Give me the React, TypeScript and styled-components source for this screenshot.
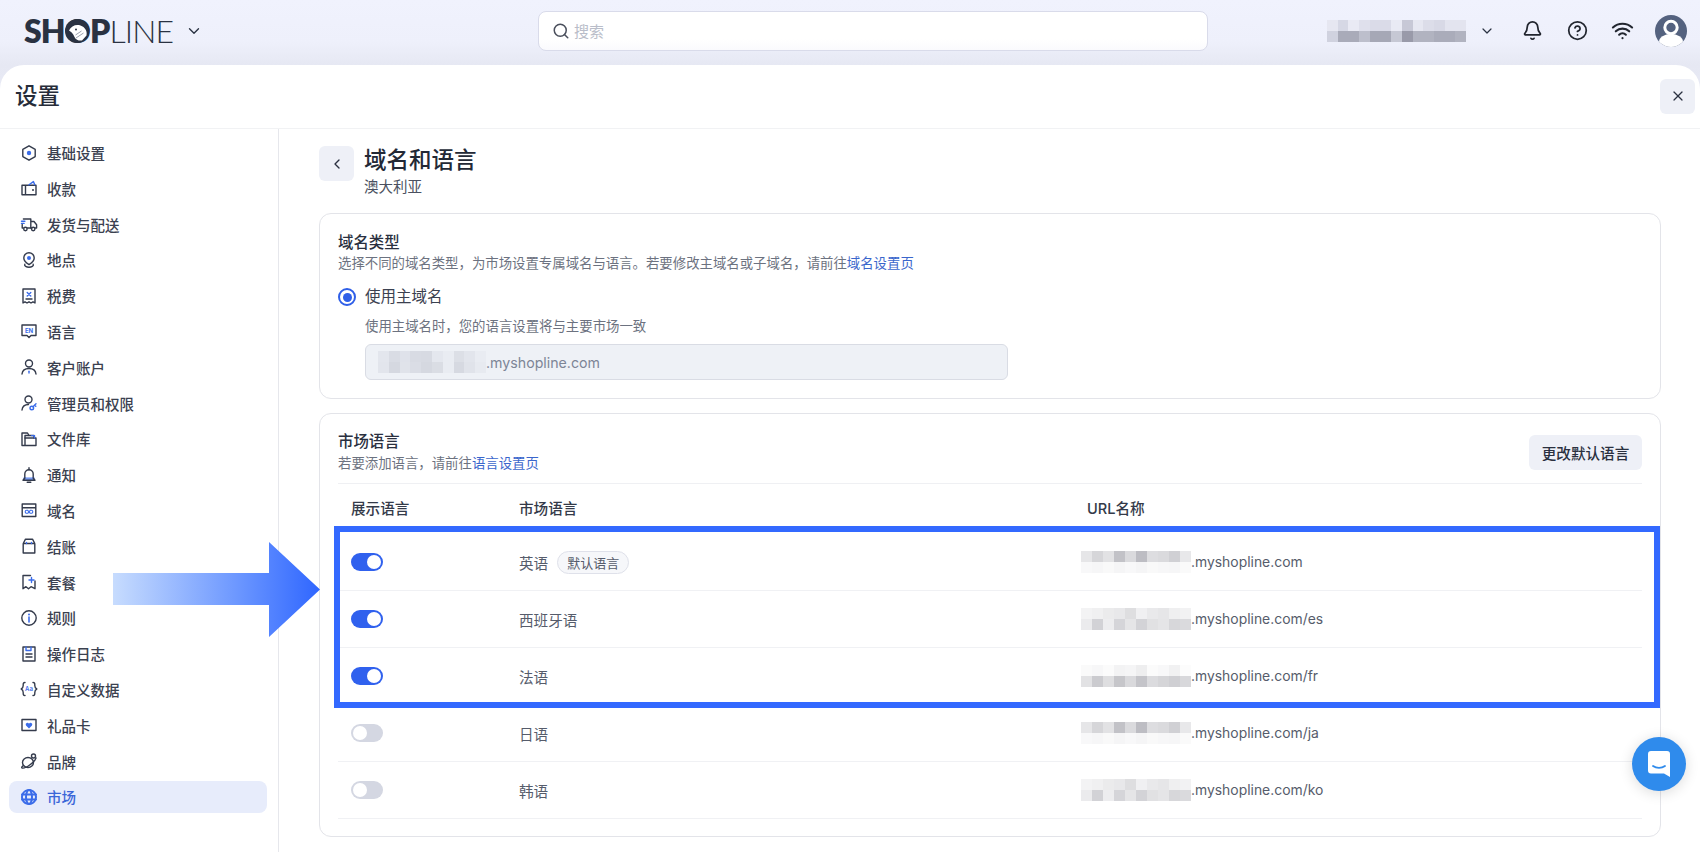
import React from "react";
import styled, { createGlobalStyle } from "styled-components";
import { Bell, ChevronDown, ChevronLeft, CircleHelp, Search, Wifi, X } from "lucide-react";

const GlobalStyle = createGlobalStyle`
  html, body {
    margin: 0;
    padding: 0;
    background: #fff;
  }
  body {
    font-family: Inter, "Noto Sans CJK SC", sans-serif;
    color: #2a3040;
  }
`;

const DARK = "#343b4c";
const BLUE = "#3b6ce9";

// 사이드바 아이콘
const navIcons: Record<string, React.ReactNode> = {
  hex: (
    <>
      <path d="M9 1.8l6.2 3.6v7.2L9 16.2l-6.2-3.6V5.4z" />
      <circle cx="9" cy="9" r="2.2" fill={BLUE} stroke="none" />
    </>
  ),
  wallet: (
    <>
      <path d="M2 6.2h14v9.6H2zM5.5 6.2v9.6" />
      <path d="M9 5.8l4.4-3.2 1.4 3.2" stroke={BLUE} />
      <circle cx="13" cy="11" r="1" fill={DARK} stroke="none" />
    </>
  ),
  truck: (
    <>
      <path d="M3.4 4h7.4v9H7.4M3.2 13H2.2V9.5M10.8 6.5h3.2l2.6 3.2V13h-1.4" />
      <path d="M10.8 13h1" />
      <circle cx="5.4" cy="14" r="1.7" />
      <circle cx="13.2" cy="14" r="1.7" />
      <path d="M1.5 6.2h3.4M1.5 8.4h2.6" stroke={BLUE} />
    </>
  ),
  pin: (
    <>
      <path d="M9 1.8A5.2 5.2 0 0 1 14.2 7c0 3-2.8 5.2-5.2 6.6C6.6 12.2 3.8 10 3.8 7A5.2 5.2 0 0 1 9 1.8z" />
      <circle cx="9" cy="7" r="2" fill={BLUE} stroke="none" />
      <path d="M4.8 13.2c-.8 1.8 1.8 3 4.2 3s5-1.2 4.2-3" />
    </>
  ),
  receipt: (
    <>
      <path d="M3 2h12v14l-2-1.2-2 1.2-2-1.2-2 1.2-2-1.2L3 16z" />
      <path d="M7.2 5.5l3.6 3.6M10.8 5.500L7.2 9.1" stroke={BLUE} />
      <path d="M6 12h6" />
    </>
  ),
  lang: (
    <>
      <path d="M2 3h14v10.5h-5l-2 2-2-2H2z" />
      <text x="9" y="10.6" textAnchor="middle" fontSize="6" fontWeight="700" fill={BLUE} stroke="none" fontFamily="Inter, sans-serif">EN</text>
    </>
  ),
  user: (
    <>
      <circle cx="9" cy="5.5" r="3.5" />
      <path d="M2 16c.4-3.8 3.200-5.500 7-5.500s6.600 1.700 7 5.500" />
      <path d="M9 13.2V15" stroke={BLUE} />
    </>
  ),
  userKey: (
    <>
      <circle cx="8.5" cy="5.5" r="3.5" />
      <path d="M2 16c.4-3.600 3.200-5.500 6.500-5.500" />
      <circle cx="11.8" cy="14" r="1.8" stroke={BLUE} />
      <path d="M13 12.7l3-3M14.6 11.100l1.200 1.200" stroke={BLUE} />
    </>
  ),
  folder: (
    <>
      <path d="M2 15.500V3h5.500L9 5.500M2 15.500h14V8H5v7.500" />
      <path d="M5 8V5.500h9V8" />
      <path d="M11.500 5.600h3V8" stroke={BLUE} />
    </>
  ),
  bell: (
    <>
      <path d="M4.800 12V8a4.200 4.200 0 0 1 8.400 0v4" />
      <path d="M3.400 11.400h11.200v2.800H3.400z" fill={BLUE} stroke="none" opacity="0.7" />
      <path d="M3 14.200h12M4.800 12L3 14.200M13.200 12l1.800 2.200M7.200 16.200h3.600M9 1.800v2" />
    </>
  ),
  domain: (
    <>
      <path d="M2.200 3h13.600v12.500H2.200zM2.200 6.800h13.600" />
      <path d="M6.700 9.300a1.500 1.500 0 1 0 0 3h1l2.600-3h1a1.500 1.500 0 1 1 0 3h-1l-2.600-3z" stroke={BLUE} strokeWidth="1.100" />
    </>
  ),
  bag: (
    <>
      <path d="M3.200 6.500h11.600V16H3.200zM3.200 6.500L5.500 2.200h7l2.300 4.300" />
      <path d="M6.500 5.500v1M11.500 5.500v1" stroke={BLUE} />
    </>
  ),
  plan: (
    <>
      <path d="M10.500 2.500H3v13.200l3-2 2.500 2 2.500-2 4 2V8" />
      <path d="M11.500 4.500v5M9 7h5" stroke={BLUE} />
    </>
  ),
  info: (
    <>
      <circle cx="9" cy="9" r="7.200" />
      <path d="M9 8v5" stroke={BLUE} strokeWidth="1.600" />
      <circle cx="9" cy="5.500" r="1" fill={BLUE} stroke="none" />
    </>
  ),
  log: (
    <>
      <path d="M3 2h12v14H3z" />
      <path d="M6 2v3.500h5V2" stroke={BLUE} />
      <path d="M6 9h6M6 12h6" />
    </>
  ),
  data: (
    <>
      <path d="M5 2.500c-2 0-1.800 1.500-1.800 3 0 1.800-.4 2.700-2 3.500 1.600.8 2 1.700 2 3.500 0 1.500-.2 3 1.800 3" />
      <path d="M13 2.500c2 0 1.800 1.500 1.800 3 0 1.800.4 2.700 2 3.500-1.600.8-2 1.700-2 3.500 0 1.500.2 3-1.800 3" />
      <text x="9" y="11" textAnchor="middle" fontSize="6" fontWeight="600" fill={BLUE} stroke="none" fontFamily="Inter, sans-serif">Aa</text>
    </>
  ),
  gift: (
    <>
      <path d="M2 3.500h14v11H2z" />
      <path d="M9 12.500L6 9.500a1.700 1.700 0 0 1 3-1.800 1.700 1.700 0 0 1 3 1.800z" fill={BLUE} stroke="none" />
    </>
  ),
  brand: (
    <>
      <ellipse cx="8" cy="10.500" rx="5.500" ry="5" />
      <path d="M3.600 13.400C2 14.500 1.200 15.500 2 16c1.500.5 5-1 8-3.200 3-2.200 5.500-5 6-6.800" />
      <circle cx="13.500" cy="4" r="2" />
    </>
  ),
  globe: (
    <g stroke={BLUE} strokeWidth="2">
      <circle cx="9" cy="9" r="7" strokeDasharray="4 1" />
      <ellipse cx="9" cy="9" rx="3" ry="7" />
      <path d="M2 6.600h14M2 11.400h14" />
    </g>
  ),
};

const navItems = [
  { icon: "hex", label: "基础设置" },
  { icon: "wallet", label: "收款" },
  { icon: "truck", label: "发货与配送" },
  { icon: "pin", label: "地点" },
  { icon: "receipt", label: "税费" },
  { icon: "lang", label: "语言" },
  { icon: "user", label: "客户账户" },
  { icon: "userKey", label: "管理员和权限" },
  { icon: "folder", label: "文件库" },
  { icon: "bell", label: "通知" },
  { icon: "domain", label: "域名" },
  { icon: "bag", label: "结账" },
  { icon: "plan", label: "套餐" },
  { icon: "info", label: "规则" },
  { icon: "log", label: "操作日志" },
  { icon: "data", label: "自定义数据" },
  { icon: "gift", label: "礼品卡" },
  { icon: "brand", label: "品牌" },
  { icon: "globe", label: "市场", active: true },
];

// 가려진 도메인 모자이크 색상
const faintA = ["#f8f8f9", "#f6f6f7", "#f9f9f9", "#f5f5f6", "#f8f8f9", "#f5f5f6", "#f9f9f9", "#f7f7f8", "#f6f6f7", "#fafafa"];
const maskA = [
  ["#e6e6e8", "#d6d6d9", "#e2e2e4", "#c2c2c7", "#dadadd", "#bdbdc3", "#dddde0", "#dadadd", "#d0d0d4", "#e8e8ea"],
  faintA,
];
const maskB = [
  ["#f3f3f4", "#f0f0f1", "#ebebec", "#e8e8ea", "#dedee0", "#f0f0f2", "#e9e9eb", "#e6e6e8", "#efeff0", "#f2f2f3"],
  ["#ebebed", "#d2d2d6", "#ededef", "#d5d5d9", "#e5e5e7", "#d3d3d7", "#e1e1e3", "#e5e5e7", "#d7d7da", "#dadadd"],
];
const maskC = [
  ["#fafafa", "#f7f7f8", "#fbfbfb", "#f3f3f4", "#f5f5f6", "#eeeeef", "#fbfbfb", "#f8f8f9", "#f1f1f2", "#fcfcfc"],
  ["#e2e2e4", "#cbcbcf", "#dedee0", "#c6c6ca", "#d9d9dc", "#c4c4c9", "#dbdbde", "#d5d5d8", "#cfcfd3", "#d8d8db"],
];
const maskAccount = [
  ["#e6e7f1", "#d6d8e5", "#e9eaf4", "#dfe0ec", "#dadbe8", "#dadbe8", "#e9eaf4", "#c7c8d6", "#e6e7f1", "#dcdde9", "#d8d9e6", "#e3e4ef", "#e3e4ef"],
  ["#d0d2df", "#a9abb9", "#a9abb9", "#bdbfcc", "#a6a8b6", "#a6a8b6", "#c6c8d4", "#999aa9", "#b1b3c0", "#b1b3c0", "#aaacba", "#aaacba", "#b1b3c0"],
];
const maskInput = [
  ["#e3e6ed", "#d9dce4", "#dfe2ea", "#d8dbe3", "#d7dae2", "#e4e7ee", "#e9ecf2", "#dcdfe6", "#e2e5ec", "#e9ecf2"],
  ["#e2e5ec", "#d5d8e0", "#e0e3ea", "#dadde5", "#d5d8e0", "#dadde4", "#e9ecf2", "#d6d9e1", "#e0e3ea", "#e7eaf0"],
];

const languages = [
  { name: "英语", path: "myshopline.com", on: true, isDefault: true, mask: maskA },
  { name: "西班牙语", path: "myshopline.com/es", on: true, mask: maskB },
  { name: "法语", path: "myshopline.com/fr", on: true, mask: maskC },
  { name: "日语", path: "myshopline.com/ja", on: false, mask: maskA },
  { name: "韩语", path: "myshopline.com/ko", on: false, mask: maskB },
];

function Mosaic({ rows, $cell = 11 }: { rows: string[][]; $cell?: number }) {
  return (
    <MosaicGrid $cols={rows[0].length} $cell={$cell}>
      {rows.flat().map((color, i) => (
        <MosaicCell key={i} $color={color} />
      ))}
    </MosaicGrid>
  );
}

function App() {
  return (
    <Page>
      <GlobalStyle />
      <TopBar>
        <LogoBox>
          <Logo>
            <b>SH</b>
            <LogoO>
              O
              <LogoBird viewBox="0 0 24 24">
                <circle cx="12" cy="12" r="12" fill="#2a3242" />
                <path d="M4 11.500C6 7 11 5 15.500 6.500 20 8 22.500 12 21.500 16.500L17 21.500c-3 .5-6-.5-7.500-3.500-1-2-1.500-4-5.500-6.500z" fill="#fff" />
                <circle cx="11" cy="10.500" r="1" fill="#2a3242" />
                <path d="M11 19l7.500-5M10.500 16l6-4" stroke="#9aa0ad" strokeWidth="1" />
              </LogoBird>
            </LogoO>
            <b>P</b>LINE
          </Logo>
          <ChevronDown size={18} strokeWidth={1.8} color="#2a3242" />
        </LogoBox>
        <SearchBox>
          <Search size={18} strokeWidth={2} color="#4a4f5c" />
          <SearchText>搜索</SearchText>
        </SearchBox>
        <TopActions>
          <Mosaic rows={maskAccount} $cell={10.7} />
          <AccountChevron>
            <ChevronDown size={16} strokeWidth={1.8} color="#2a3242" />
          </AccountChevron>
          <TopIcon><Bell size={21} strokeWidth={2} /></TopIcon>
          <TopIcon><CircleHelp size={21} strokeWidth={2} /></TopIcon>
          <TopIcon><Wifi size={23} strokeWidth={2.2} /></TopIcon>
          <Avatar viewBox="0 0 32 32">
            <defs>
              <clipPath id="avatar-clip"><circle cx="16" cy="16" r="16" /></clipPath>
            </defs>
            <circle cx="16" cy="16" r="16" fill="#54627f" />
            <g clipPath="url(#avatar-clip)">
              <ellipse cx="16" cy="27" rx="12" ry="8" fill="#fff" />
              <circle cx="16" cy="12.5" r="6.2" fill="#54627f" stroke="#fff" strokeWidth="3" />
            </g>
          </Avatar>
        </TopActions>
      </TopBar>

      <Panel>
        <TitleBar>
          <PanelTitle>设置</PanelTitle>
          <SquareButton><X size={16} strokeWidth={1.8} color="#2a3040" /></SquareButton>
        </TitleBar>
        <Body>
          <Sidebar>
            {navItems.map((item) => (
              <NavItem key={item.label} $active={!!item.active}>
                <NavIcon viewBox="0 0 18 18">{navIcons[item.icon]}</NavIcon>
                {item.label}
              </NavItem>
            ))}
          </Sidebar>
          <Main>
            <PageHead>
              <SquareButton><ChevronLeft size={16} strokeWidth={2} color="#2a3040" /></SquareButton>
              <div>
                <PageTitle>域名和语言</PageTitle>
                <PageSub>澳大利亚</PageSub>
              </div>
            </PageHead>

            <DomainCard>
              <CardTitle>域名类型</CardTitle>
              <CardDesc>
                选择不同的域名类型，为市场设置专属域名与语言。若要修改主域名或子域名，请前往<TextLink>域名设置页</TextLink>
              </CardDesc>
              <RadioRow>
                <Radio />
                使用主域名
              </RadioRow>
              <RadioHint>使用主域名时，您的语言设置将与主要市场一致</RadioHint>
              <DomainInput>
                <Mosaic rows={maskInput} $cell={10.8} />
                .myshopline.com
              </DomainInput>
            </DomainCard>

            <MarketCard>
              <MarketHead>
                <MarketIntro>
                  <CardTitle>市场语言</CardTitle>
                  <CardDesc>若要添加语言，请前往<TextLink>语言设置页</TextLink></CardDesc>
                </MarketIntro>
                <GreyButton>更改默认语言</GreyButton>
              </MarketHead>
              <HeadRow>
                <span>展示语言</span>
                <span>市场语言</span>
                <span>URL名称</span>
              </HeadRow>
              {languages.map((lang) => (
                <LangRow key={lang.name}>
                  <Toggle $on={lang.on} />
                  <LangName>
                    {lang.name}
                    {lang.isDefault && <DefaultTag>默认语言</DefaultTag>}
                  </LangName>
                  <UrlCell>
                    <Mosaic rows={lang.mask} />
                    .{lang.path}
                  </UrlCell>
                </LangRow>
              ))}
            </MarketCard>
          </Main>
        </Body>
      </Panel>

      <CalloutArrow viewBox="0 0 207 95">
        <defs>
          <linearGradient id="arrow-fill" x1="0" x2="1" y1="0" y2="0">
            <stop offset="0" stopColor="#c7dcfe" />
            <stop offset="0.6" stopColor="#6c97ff" />
            <stop offset="1" stopColor="#2f66ff" />
          </linearGradient>
        </defs>
        <path d="M0 31h156V0l51 47.500L156 95V63H0z" fill="url(#arrow-fill)" />
      </CalloutArrow>
      <CalloutFrame />

      <ChatButton>
        <svg width="26" height="28" viewBox="0 0 26 28">
          <path d="M5 1h16a3 3 0 0 1 3 3v23l-6-3.500H5a3 3 0 0 1-3-3V4a3 3 0 0 1 3-3z" fill="#fff" />
          <path d="M7 16c3.500 2.600 8.500 2.600 12 0" fill="none" stroke="#2f8bec" strokeWidth="1.800" strokeLinecap="round" />
        </svg>
      </ChatButton>
    </Page>
  );
}

export default App;


const Page = styled.div`
  position: relative;
  width: 1700px;
  height: 852px;
  overflow: hidden;
  background: linear-gradient(180deg, #f0f2fd 0, #eef0fb 42px, #e6e8f3 65px, #e8eaf5 92px);
`;

const TopBar = styled.header`
  display: grid;
  grid-template-columns: 538px 670px 1fr;
  align-items: center;
  height: 65px;
  padding-bottom: 4px;
  box-sizing: border-box;
`;

const LogoBox = styled.div`
  display: flex;
  align-items: center;
  gap: 12px;
  padding-left: 24px;
`;

const Logo = styled.div`
  font-family: Lato, sans-serif;
  font-size: 32px;
  font-weight: 300;
  line-height: 36px;
  letter-spacing: -0.9px;
  color: #2a3242;
  b {
    font-weight: 800;
  }
`;

const LogoO = styled.b`
  position: relative;
`;

const LogoBird = styled.svg`
  position: absolute;
  left: 0.5px;
  top: 8px;
  width: 24px;
  height: 24px;
`;

const SearchBox = styled.div`
  display: flex;
  align-items: center;
  gap: 4px;
  height: 40px;
  padding-left: 13px;
  box-sizing: border-box;
  background: linear-gradient(180deg, #fff 70%, #fafafd);
  border: 1.5px solid #d9dbea;
  border-radius: 8px;
`;

const SearchText = styled.span`
  font-size: 15px;
  color: #b9bdc9;
`;

const TopActions = styled.div`
  display: flex;
  align-items: center;
  justify-content: flex-end;
  padding-right: 13px;
`;

const AccountChevron = styled.span`
  display: flex;
  margin: 0 25px 0 13px;
`;

const TopIcon = styled.span`
  display: flex;
  justify-content: center;
  width: 24px;
  margin-right: 21px;
  color: #22262f;
`;

const Avatar = styled.svg`
  width: 32px;
  height: 32px;
`;

const Panel = styled.section`
  display: flex;
  flex-direction: column;
  height: 787px;
  background: #fff;
  border-radius: 24px 24px 0 0;
`;

const TitleBar = styled.div`
  display: flex;
  align-items: center;
  justify-content: space-between;
  flex: none;
  height: 64px;
  padding: 0 5px 1px 15px;
  box-sizing: border-box;
  border-bottom: 1px solid #f1f2f4;
`;

const PanelTitle = styled.h1`
  margin: 0 0 4px;
  font-size: 22.5px;
  font-weight: 500;
  color: #262c39;
`;

const SquareButton = styled.span`
  display: flex;
  align-items: center;
  justify-content: center;
  flex: none;
  width: 35px;
  height: 35px;
  background: #eef0f7;
  border-radius: 6px;
`;

const Body = styled.div`
  display: flex;
  flex: 1;
  min-height: 0;
`;

const Sidebar = styled.nav`
  display: flex;
  flex-direction: column;
  gap: 3.8px;
  flex: none;
  width: 279px;
  padding: 7.5px 11px 0 9px;
  box-sizing: border-box;
  border-right: 1px solid #e6e7ec;
`;

const NavItem = styled.div<{ $active: boolean }>`
  display: flex;
  align-items: center;
  gap: 9px;
  flex: none;
  height: 32px;
  padding-left: 11px;
  border-radius: 8px;
  font-size: 14.5px;
  font-weight: 500;
  color: ${({ $active }) => ($active ? "#3a66d8" : "#3b4150")};
  background: ${({ $active }) => ($active ? "#e7ecfb" : "transparent")};
`;

const NavIcon = styled.svg`
  flex: none;
  width: 18px;
  height: 18px;
  fill: none;
  stroke: ${DARK};
  stroke-width: 1.4;
  stroke-linejoin: round;
  stroke-linecap: round;
`;

const Main = styled.main`
  flex: 1;
  min-width: 0;
  padding: 17px 39px 0 40px;
`;

const PageHead = styled.div`
  display: flex;
  gap: 10px;
  height: 67px;
`;

const PageTitle = styled.div`
  margin-top: -1px;
  font-size: 22.5px;
  font-weight: 500;
  line-height: 30px;
  color: #232936;
`;

const PageSub = styled.div`
  margin-top: 1px;
  font-size: 14.5px;
  line-height: 22px;
  color: #4b5160;
`;

const Card = styled.div`
  box-sizing: border-box;
  padding: 0 18px;
  background: #fff;
  border: 1px solid #e3e4e9;
  border-radius: 12px;
`;

const DomainCard = styled(Card)`
  height: 186px;
  padding-top: 18px;
`;

const MarketCard = styled(Card)`
  height: 424px;
  margin-top: 14px;
  padding-top: 17px;
`;

const CardTitle = styled.div`
  font-size: 15.4px;
  font-weight: 500;
  line-height: 21px;
  color: #2a3040;
`;

const CardDesc = styled.div`
  font-size: 13.4px;
  line-height: 20px;
  color: #6c7280;
`;

const TextLink = styled.span`
  color: #3a66cc;
`;

const RadioRow = styled.div`
  display: flex;
  align-items: center;
  gap: 9px;
  margin-top: 14px;
  font-size: 15.5px;
  line-height: 20px;
  color: #3b4150;
`;

const Radio = styled.span`
  position: relative;
  flex: none;
  width: 18px;
  height: 18px;
  box-sizing: border-box;
  border: 2px solid #2f5fe8;
  border-radius: 50%;
  &::after {
    content: "";
    position: absolute;
    inset: 2.5px;
    background: #2f5fe8;
    border-radius: 50%;
  }
`;

const RadioHint = styled.div`
  margin: 9px 0 8px 27px;
  font-size: 13.4px;
  line-height: 20px;
  color: #6c7280;
`;

const DomainInput = styled.div`
  display: flex;
  align-items: center;
  width: 643px;
  height: 36px;
  margin-left: 27px;
  padding-left: 12px;
  box-sizing: border-box;
  background: #eef1f6;
  border: 1px solid #d9dce4;
  border-radius: 6px;
  font-size: 14.2px;
  color: #7d8596;
`;

const MarketHead = styled.div`
  display: flex;
  align-items: center;
  justify-content: space-between;
  padding-bottom: 10px;
  border-bottom: 1px solid #eff0f3;
`;

const MarketIntro = styled.div`
  display: flex;
  flex-direction: column;
  gap: 1px;
`;

const GreyButton = styled.span`
  display: flex;
  align-items: center;
  justify-content: center;
  width: 113px;
  height: 35px;
  background: #eef0f7;
  border-radius: 6px;
  font-size: 14.6px;
  font-weight: 500;
  color: #2a3040;
`;

const TableRow = styled.div`
  display: grid;
  grid-template-columns: 168px 568px 1fr;
  align-items: center;
  padding-left: 13px;
`;

const HeadRow = styled(TableRow)`
  box-sizing: border-box;
  height: 50px;
  padding-bottom: 3px;
  font-size: 14.6px;
  font-weight: 500;
  color: #343a49;
`;

const LangRow = styled(TableRow)`
  box-sizing: border-box;
  height: 57px;
  border-bottom: 1px solid #f0f1f4;
  font-size: 14.6px;
  color: #565c6b;
`;

const Toggle = styled.span<{ $on: boolean }>`
  position: relative;
  display: block;
  width: 32px;
  height: 18px;
  border-radius: 9px;
  background: ${({ $on }) => ($on ? "#3061ee" : "#d4d7e2")};
  &::after {
    content: "";
    position: absolute;
    top: 2px;
    left: ${({ $on }) => ($on ? "16px" : "2px")};
    width: 14px;
    height: 14px;
    background: #fff;
    border-radius: 50%;
  }
`;

const LangName = styled.div`
  display: flex;
  align-items: center;
  gap: 9px;
`;

const DefaultTag = styled.span`
  display: inline-flex;
  align-items: center;
  height: 23px;
  padding: 0 9px;
  box-sizing: border-box;
  background: #f6f7fa;
  border: 1px solid #dfe1ea;
  border-radius: 12px;
  font-size: 13px;
  color: #565c6b;
`;

const UrlCell = styled.div`
  display: flex;
  align-items: center;
  margin-left: -6px;
  font-size: 13.9px;
`;

const MosaicGrid = styled.div<{ $cols: number; $cell: number }>`
  display: grid;
  flex: none;
  grid-template-columns: repeat(${({ $cols }) => $cols}, ${({ $cell }) => $cell}px);
  grid-auto-rows: 11px;
`;

const MosaicCell = styled.span<{ $color: string }>`
  background: ${({ $color }) => $color};
`;

const CalloutArrow = styled.svg`
  position: absolute;
  left: 113px;
  top: 542px;
  width: 207px;
  height: 95px;
`;

const CalloutFrame = styled.div`
  position: absolute;
  left: 334px;
  top: 526px;
  width: 1326px;
  height: 182px;
  box-sizing: border-box;
  border: 6px solid #3369ff;
`;

const ChatButton = styled.div`
  position: absolute;
  left: 1632px;
  top: 737px;
  display: flex;
  align-items: center;
  justify-content: center;
  width: 54px;
  height: 54px;
  background: #2f8bec;
  border-radius: 50%;
  box-shadow: 0 2px 14px rgba(0, 0, 0, 0.14);
`;
